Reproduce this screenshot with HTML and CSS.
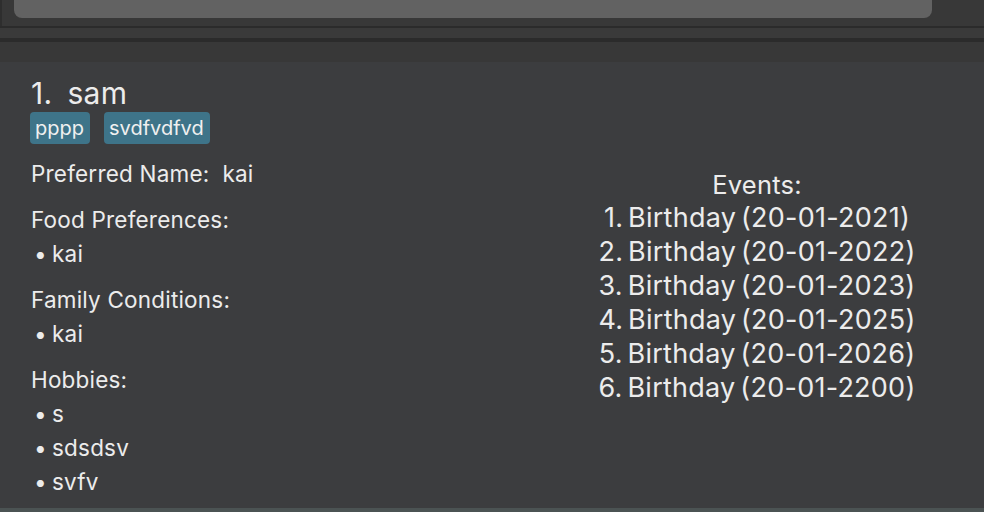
FILE: index.html
```html
<!DOCTYPE html>
<html>
<head>
<meta charset="utf-8">
<link rel="stylesheet" href="styles.css">
</head>
<body>
<div class="app">
  <div class="topbar"><div class="cmdbox"></div></div>
  <div class="sep-thin"></div>
  <div class="strip"></div>
  <div class="sep-thick"></div>
  <div class="gap"></div>
  <div class="card">
    <div class="title"><span class="idx">1.</span><span class="name">sam</span></div>
    <div class="tags"><span class="tag">pppp</span><span class="tag">svdfvdfvd</span></div>
    <div class="cols">
      <div class="left">
        <div class="group"><div class="line">Preferred Name:&nbsp; kai</div></div>
        <div class="group">
          <div class="line">Food Preferences:</div>
          <div class="line bullet">kai</div>
        </div>
        <div class="group">
          <div class="line">Family Conditions:</div>
          <div class="line bullet">kai</div>
        </div>
        <div class="group">
          <div class="line">Hobbies:</div>
          <div class="line bullet">s</div>
          <div class="line bullet">sdsdsv</div>
          <div class="line bullet">svfv</div>
        </div>
      </div>
      <div class="right">
        <div class="events-title">Events:</div>
        <div class="event">1. Birthday (20-01-2021)</div>
        <div class="event">2. Birthday (20-01-2022)</div>
        <div class="event">3. Birthday (20-01-2023)</div>
        <div class="event">4. Birthday (20-01-2025)</div>
        <div class="event">5. Birthday (20-01-2026)</div>
        <div class="event">6. Birthday (20-01-2200)</div>
      </div>
    </div>
  </div>
  <div class="bottom"></div>
</div>
</body>
</html>
```
FILE: styles.css
```css
html, body {
  margin: 0;
  padding: 0;
  background: #383838;
  overflow: hidden;
}
.app {
  width: 984px;
  height: 512px;
  display: flex;
  flex-direction: column;
  font-family: Inter, "Noto Sans", sans-serif;
  color: #ececec;
}
.topbar {
  height: 26px;
  background: #383838;
  border-left: 2px solid #2e2e2e;
  box-sizing: border-box;
  padding-left: 12px;
}
.cmdbox {
  width: 918px;
  height: 18px;
  background: #626262;
  border-radius: 0 0 8px 8px;
}
.sep-thin { height: 2px; background: #2b2b2b; }
.strip { height: 10px; background: #3a3a3a; }
.sep-thick { height: 4px; background: #2b2b2b; }
.gap { height: 20px; background: #383838; }
.card {
  height: 446px;
  background: #3c3d3f;
  box-sizing: border-box;
  padding: 14px 0 0 31px;
  overflow: hidden;
}
.title {
  font-size: 30px;
  line-height: 34px;
  display: flex;
  gap: 15px;
  letter-spacing: 0.3px;
}
.tags {
  display: flex;
  gap: 14px;
  margin-top: 2px;
  margin-left: -1px;
}
.tag {
  background: #3e7489;
  border-radius: 4px;
  font-size: 20px;
  line-height: 32px;
  padding: 0 6px 0 5px;
  letter-spacing: 0;
  color: #f0f0f0;
}
.cols {
  display: grid;
  grid-template-columns: 500px 452px;
  margin-top: 13px;
}
.left {
  display: flex;
  flex-direction: column;
  gap: 12px;
  font-size: 22.5px;
  letter-spacing: 0.2px;
}
.line {
  line-height: 34px;
}
.bullet::before {
  content: "•";
  display: inline-block;
  width: 21px;
  padding-left: 3px;
  box-sizing: border-box;
}
.right {
  text-align: center;
  font-size: 27px;
  padding-top: 11px;
  letter-spacing: 0.25px;
}
.events-title {
  line-height: 33px;
  font-size: 25.5px;
}
.event {
  line-height: 34px;
  word-spacing: -3px;
}
.bottom {
  height: 4px;
  background: #4b5353;
}
```
